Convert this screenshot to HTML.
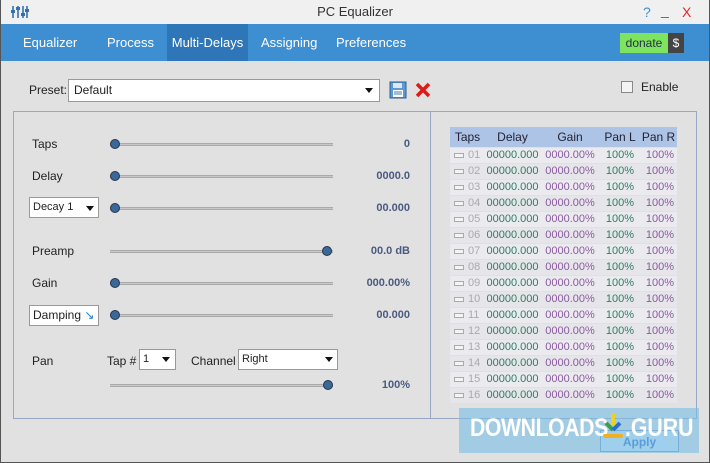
<!DOCTYPE html>
<html><head><style>
*{margin:0;padding:0;box-sizing:border-box}
body{width:710px;height:463px;overflow:hidden;background:#e1e1e1;font-family:"Liberation Sans",sans-serif;font-size:12px;color:#222;position:relative}
.a{position:absolute}
.win{position:absolute;left:0;top:0;width:710px;height:463px;border:1px solid #555;border-top:none}
.title{left:1px;top:0;width:708px;height:24px;background:#f0f0f0;text-align:center;line-height:24px;font-size:13px;color:#333}
.tabs{left:1px;top:24px;width:708px;height:37px;background:#3d8fd1}
.tab{position:absolute;top:0;height:37px;line-height:37px;color:#fff;font-size:13px}
.track{position:absolute;height:3px;background:#c8c8c8;border:1px solid #aaa;border-width:1px 0}
.knob{position:absolute;width:10px;height:10px;border-radius:50%;background:#3a6898;border:1px solid #26364d}
.val{position:absolute;right:300px;color:#4b5a80;font-weight:bold;font-size:11px;text-align:right}
.lbl{position:absolute;font-size:12px}
.sel{position:absolute;background:#fff;border:1px solid #999;font-size:11px;padding-left:3px}
.tri{position:absolute;width:0;height:0;border-left:4px solid transparent;border-right:4px solid transparent;border-top:5px solid #111}
table{border-collapse:collapse;font-size:11px}
td{height:16px;padding:0;border-bottom:1px solid #e0e0e4}
</style></head><body>
<div class="win"></div>
<div class="a title">PC Equalizer</div>
<svg class="a" style="left:11px;top:5px" width="18" height="14"><g stroke="#3470b0" stroke-width="1.6"><line x1="2" y1="1" x2="2" y2="13"/><line x1="7" y1="1" x2="7" y2="13"/><line x1="12" y1="1" x2="12" y2="13"/><line x1="16" y1="1" x2="16" y2="13"/></g><g fill="#3470b0"><rect x="0" y="5" width="4" height="3"/><rect x="5" y="2" width="4" height="3"/><rect x="10" y="8" width="4" height="3"/><rect x="14" y="4" width="4" height="3"/></g></svg>
<div class="a" style="left:643px;top:4px;color:#3a8fd8;font-size:14px">?</div>
<div class="a" style="left:661px;top:2px;color:#e22;font-size:14px">_</div>
<div class="a" style="left:682px;top:4px;color:#e22;font-size:14px">X</div>
<div class="a tabs">
<div class="tab" style="left:22px">Equalizer</div>
<div class="tab" style="left:106px">Process</div>
<div class="tab" style="left:166px;width:81px;background:#2e76b8;text-align:center">Multi-Delays</div>
<div class="tab" style="left:260px">Assigning</div>
<div class="tab" style="left:335px">Preferences</div>
<div class="a" style="left:619px;top:9px;width:48px;height:20px;background:#7ee35e;color:#234;font-size:12px;line-height:20px;text-align:center">donate</div>
<div class="a" style="left:667px;top:9px;width:16px;height:20px;background:#444;color:#fff;line-height:20px;text-align:center">$</div>
</div>
<div class="lbl" style="left:29px;top:83px">Preset:</div>
<div class="sel" style="left:68px;top:79px;width:312px;height:23px;font-size:12px;line-height:21px;padding-left:5px">Default</div>
<div class="tri" style="left:365px;top:88px"></div>
<svg class="a" style="left:389px;top:81px" width="18" height="18"><rect x="1" y="1" width="16" height="16" fill="#5a9ad6" stroke="#2d5f96"/><rect x="4" y="2" width="9" height="5" fill="#dfe8f2"/><rect x="4" y="9" width="10" height="7" fill="#fff"/><g stroke="#4a78a8"><line x1="5" y1="11" x2="13" y2="11"/><line x1="5" y1="13" x2="13" y2="13"/></g></svg>
<svg class="a" style="left:415px;top:82px" width="16" height="16"><g stroke="#e01818" stroke-width="3.5"><line x1="2" y1="2" x2="14" y2="14"/><line x1="14" y1="2" x2="2" y2="14"/></g></svg>
<div class="a" style="left:621px;top:81px;width:12px;height:12px;border:1px solid #888;background:#f4f4f4"></div>
<div class="lbl" style="left:641px;top:80px">Enable</div>

<div class="a" style="left:13px;top:111px;width:684px;height:308px;border:1px solid #96a8c4"></div>
<div class="a" style="left:430px;top:111px;width:1px;height:308px;background:#96a8c4"></div>

<div class="lbl" style="left:32px;top:137px">Taps</div>
<div class="lbl" style="left:32px;top:169px">Delay</div>
<div class="sel" style="left:29px;top:197px;width:70px;height:21px;line-height:19px">Decay 1</div><div class="tri" style="left:86px;top:206px"></div>
<div class="lbl" style="left:32px;top:244px">Preamp</div>
<div class="lbl" style="left:32px;top:276px">Gain</div>
<div class="sel" style="left:29px;top:305px;width:70px;height:21px;line-height:19px;font-size:12px">Damping <span style="color:#1a7fd8">&#x2198;</span></div>
<div class="lbl" style="left:32px;top:354px">Pan</div>
<div class="lbl" style="left:107px;top:354px">Tap #</div>
<div class="sel" style="left:139px;top:349px;width:37px;height:21px;line-height:19px">1</div><div class="tri" style="left:162px;top:357px"></div>
<div class="lbl" style="left:191px;top:354px">Channel</div>
<div class="sel" style="left:238px;top:349px;width:100px;height:21px;line-height:19px">Right</div><div class="tri" style="left:325px;top:357px"></div>

<div class="track" style="left:110px;top:143px;width:223px"></div><div class="knob" style="left:110px;top:139px"></div><div class="val" style="top:138px">0</div>
<div class="track" style="left:110px;top:175px;width:223px"></div><div class="knob" style="left:110px;top:171px"></div><div class="val" style="top:170px">0000.0</div>
<div class="track" style="left:110px;top:207px;width:223px"></div><div class="knob" style="left:110px;top:203px"></div><div class="val" style="top:202px">00.000</div>
<div class="track" style="left:110px;top:250px;width:223px"></div><div class="knob" style="left:322px;top:246px"></div><div class="val" style="top:245px">00.0 dB</div>
<div class="track" style="left:110px;top:282px;width:223px"></div><div class="knob" style="left:110px;top:278px"></div><div class="val" style="top:277px">000.00%</div>
<div class="track" style="left:110px;top:314px;width:223px"></div><div class="knob" style="left:110px;top:310px"></div><div class="val" style="top:309px">00.000</div>
<div class="track" style="left:110px;top:384px;width:223px"></div><div class="knob" style="left:323px;top:380px"></div><div class="val" style="top:379px">100%</div>

<table class="a" style="left:450px;top:127px;width:227px">
<tr style="background:#aec4e6;font-size:12px;color:#223"><td style="height:20px;text-align:center;width:35px">Taps</td><td style="text-align:center;width:55px">Delay</td><td style="text-align:center;width:60px">Gain</td><td style="text-align:center;width:40px">Pan L</td><td style="text-align:center">Pan R</td></tr>
<tbody id="tb"></tbody>
</table>
<script>
var h='';for(var i=1;i<=16;i++){var n=(i<10?'0':'')+i;h+='<tr style="background:'+(i%2?'#ebebef':'#e6e6ea')+'"><td><span style="display:inline-block;width:10px;height:5px;border:1px solid #aaa;background:#f4f4f4;margin:0 4px 0 4px;vertical-align:middle"></span><span style="color:#aaa">'+n+'</span></td><td style="color:#2e7d5e;text-align:center">00000.000</td><td style="color:#8a5aa0;text-align:center">0000.00%</td><td style="color:#2e7d5e;text-align:center">100%</td><td style="color:#8a5aa0;text-align:right;padding-right:3px">100%</td></tr>';}
document.getElementById('tb').innerHTML=h;
</script>

<div class="a" style="left:600px;top:430px;width:79px;height:22px;border:1px solid #7a9ac0;background:#d8e8f8;color:#2f6fc0;text-align:center;line-height:22px;font-weight:bold">Apply</div>
<div class="a" style="left:459px;top:408px;width:240px;height:45px;background:rgba(120,190,230,0.6)"></div>
<div class="a" style="left:470px;top:414px;color:#fff;font-size:25px;font-weight:bold;letter-spacing:-0.5px;transform:scaleX(0.85);transform-origin:left">DOWNLOADS</div>
<svg class="a" style="left:603px;top:413px" width="20" height="27"><line x1="10" y1="1" x2="10" y2="12" stroke="#f0d020" stroke-width="4"/><line x1="3" y1="10" x2="10" y2="17" stroke="#3aa040" stroke-width="4"/><line x1="17" y1="10" x2="10" y2="17" stroke="#2a70c8" stroke-width="4"/><line x1="2" y1="23" x2="18" y2="23" stroke="#f0b020" stroke-width="4" stroke-linecap="round"/></svg>
<div class="a" style="left:625px;top:414px;color:#fff;font-size:25px;font-weight:bold;transform:scaleX(0.85);transform-origin:left">.GURU</div>
</body></html>
